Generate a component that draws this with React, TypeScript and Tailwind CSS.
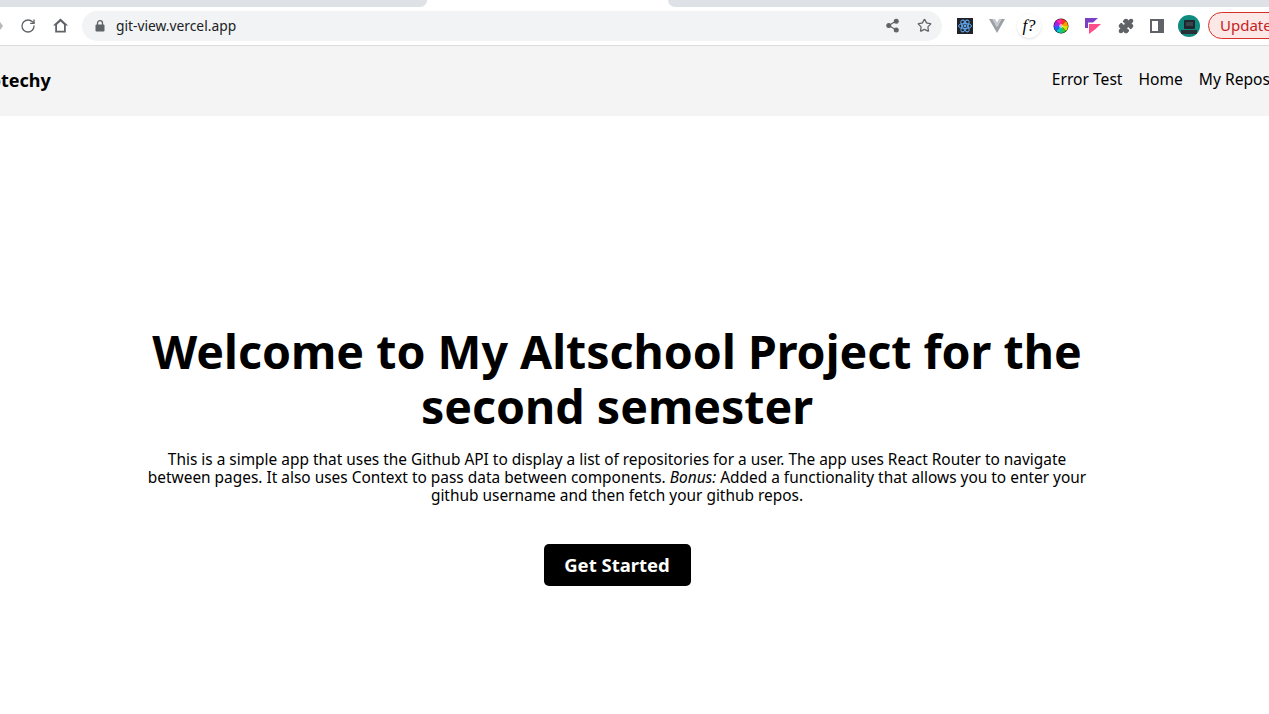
import { Puzzle, RotateCw, Share2, Star } from "lucide-react";

const font = { fontFamily: '"Noto Sans", "Open Sans", sans-serif' };

const LockIcon = () => (
  <svg width="10" height="12" viewBox="0 0 10 12">
    <path d="M2.500 5V3.200a2.500 2.500 0 0 1 5 0V5" fill="none" stroke="#5f6368" strokeWidth="1.300" />
    <rect x="0.500" y="4.500" width="9" height="7" rx="1" fill="#5f6368" />
  </svg>
);

const HomeIcon = () => (
  <svg width="17" height="17" viewBox="0 0 17 17">
    <path d="M8.500 1.500L1 8.500h2.200V15.500h10.600V8.500H16z M5 7.700l3.500-3.300L12 7.700v6H5z" fill="#5f6368" fillRule="evenodd" />
  </svg>
);

const ReactIcon = () => (
  <svg width="16" height="16" viewBox="0 0 16 16" className="bg-[#20232a]">
    <g fill="none" stroke="#61a8ef" strokeWidth="1">
      <ellipse cx="8" cy="8" rx="6.500" ry="2.600" />
      <ellipse cx="8" cy="8" rx="6.500" ry="2.600" transform="rotate(60 8 8)" />
      <ellipse cx="8" cy="8" rx="6.500" ry="2.600" transform="rotate(120 8 8)" />
    </g>
    <circle cx="8" cy="8" r="1.400" fill="#61a8ef" />
  </svg>
);

const VueIcon = () => (
  <svg width="16" height="14" viewBox="0 0 16 14">
    <path d="M0 0h3.500L8 8l4.500-8H16L8 14z" fill="#9aa0a6" />
    <path d="M3.500 0H6l2 3.500L10 0h2.500L8 8z" fill="#c4c7cb" />
  </svg>
);

const ColorWheel = () => (
  <svg width="16" height="16" viewBox="0 0 16 16">
    <circle cx="8" cy="8" r="7.500" fill="#111" />
    <path d="M8 8V1a7 7 0 0 1 5 2z" fill="#ff2d2d" />
    <path d="M8 8l5-5a7 7 0 0 1 2 5z" fill="#ff9d00" />
    <path d="M8 8h7a7 7 0 0 1-2 5z" fill="#e0e000" />
    <path d="M8 8l5 5a7 7 0 0 1-5 2z" fill="#28c940" />
    <path d="M8 8v7a7 7 0 0 1-5-2z" fill="#00c8c8" />
    <path d="M8 8l-5 5a7 7 0 0 1-2-5z" fill="#2a5cff" />
    <path d="M8 8H1a7 7 0 0 1 2-5z" fill="#a020f0" />
    <path d="M8 8L3 3a7 7 0 0 1 5-2z" fill="#ff20c0" />
    <circle cx="8" cy="8" r="2" fill="#fff" opacity="0.6" />
  </svg>
);

const FlagIcon = () => (
  <svg width="16" height="16" viewBox="0 0 16 16">
    <path d="M0 0h13L8 4.500H3V10H0z" fill="#7b3fc4" />
    <path d="M4 6h12l-6 5.500L4 16z" fill="#ff4f8b" />
  </svg>
);

const Avatar = () => (
  <svg width="22" height="22" viewBox="0 0 22 22" className="rounded-full">
    <rect width="22" height="22" fill="#0f8a7e" />
    <rect x="6" y="5" width="11" height="9" rx="1" fill="#20262b" />
    <rect x="8" y="7" width="7" height="4" fill="#3a444c" />
    <rect x="3" y="15" width="16" height="4" fill="#2a3036" />
  </svg>
);

export default function App() {
  return (
    <div className="h-[714px] w-[1269px] overflow-hidden bg-white text-black" style={font}>
      {/* tab strip */}
      <div className="flex h-[7px] bg-white">
        <div className="w-[427px] rounded-br-[7px] bg-[#dee1e6]" />
        <div className="w-[241px]" />
        <div className="flex-1 rounded-bl-[7px] bg-[#dee1e6]" />
      </div>

      {/* browser toolbar */}
      <div className="flex h-[39px] items-center border-b border-[#dcdcdc] bg-white pb-[1px]">
        <div className="flex w-[82px] shrink-0 items-center">
          <svg width="3" height="8" viewBox="0 0 3 8">
            <path d="M0 0l3 4-3 4z" fill="#b5b7ba" />
          </svg>
          <RotateCw size={16} strokeWidth={2} className="ml-[17px] text-[#5f6368]" />
          <div className="ml-[16px]"><HomeIcon /></div>
        </div>
        <div className="flex h-[30px] w-[860px] shrink-0 items-center rounded-full bg-[#f1f3f4] pl-[13px] pr-[10px]">
          <LockIcon />
          <span className="ml-[11px] flex-1 pt-[2px] text-[13.800px] text-[#202124]">git-view.vercel.app</span>
          <Share2 size={15} fill="#5f6368" className="text-[#5f6368]" />
          <Star size={15} strokeWidth={2} className="ml-[17px] text-[#5f6368]" />
        </div>
        <div className="ml-[15px] flex items-center">
          <ReactIcon />
          <div className="ml-[16px]"><VueIcon /></div>
          <div className="ml-[12px] flex h-[24px] w-[24px] shrink-0 items-center justify-center rounded-full bg-white font-['Liberation_Serif'] text-[17px] italic shadow">f?</div>
          <div className="ml-[12px]"><ColorWheel /></div>
          <div className="ml-[16px]"><FlagIcon /></div>
          <Puzzle size={16} fill="#5f6368" className="ml-[17px] text-[#5f6368]" />
          <div className="ml-[16px] flex h-[14px] w-[14px] shrink-0 justify-end border-2 border-[#5f6368]">
            <div className="w-[4px] bg-[#5f6368]" />
          </div>
          <div className="ml-[14px]"><Avatar /></div>
          <div className="ml-[8px] flex h-[27px] w-[90px] shrink-0 items-center rounded-full border border-[#d93025] bg-[#fce8e6] pl-[11px] text-[15px] text-[#c5221f]">
            Update
          </div>
        </div>
      </div>

      {/* page nav, scrolled a little sideways in the capture */}
      <nav className="flex h-[70px] w-[1269px] items-center justify-between bg-[#f4f4f4]">
        <div className="-ml-[34px] pb-[2px] text-[18px] font-bold">Geotechy</div>
        <div className="-mr-[1px] flex gap-[16px] pb-[3px] text-[15.600px]">
          <a>Error Test</a>
          <a>Home</a>
          <a className="whitespace-nowrap">My Repos</a>
        </div>
      </nav>

      {/* hero */}
      <main className="flex w-[1234px] flex-col items-center pt-[208px] text-center">
        <h1 className="w-[960px] text-[46.500px] font-bold leading-[55px]">
          Welcome to My Altschool Project for the second semester
        </h1>
        <p className="mt-[17px] w-[950px] text-[15.430px] leading-[18px]">
          This is a simple app that uses the Github API to display a list of repositories for a user. The app uses React Router to navigate between pages. It also uses Context to pass data between components. <em>Bonus:</em> Added a functionality that allows you to enter your github username and then fetch your github repos.
        </p>
        <button className="mt-[39px] h-[42px] w-[147px] rounded-[5px] bg-black text-[18.500px] font-bold text-white">
          Get Started
        </button>
      </main>
    </div>
  );
}
